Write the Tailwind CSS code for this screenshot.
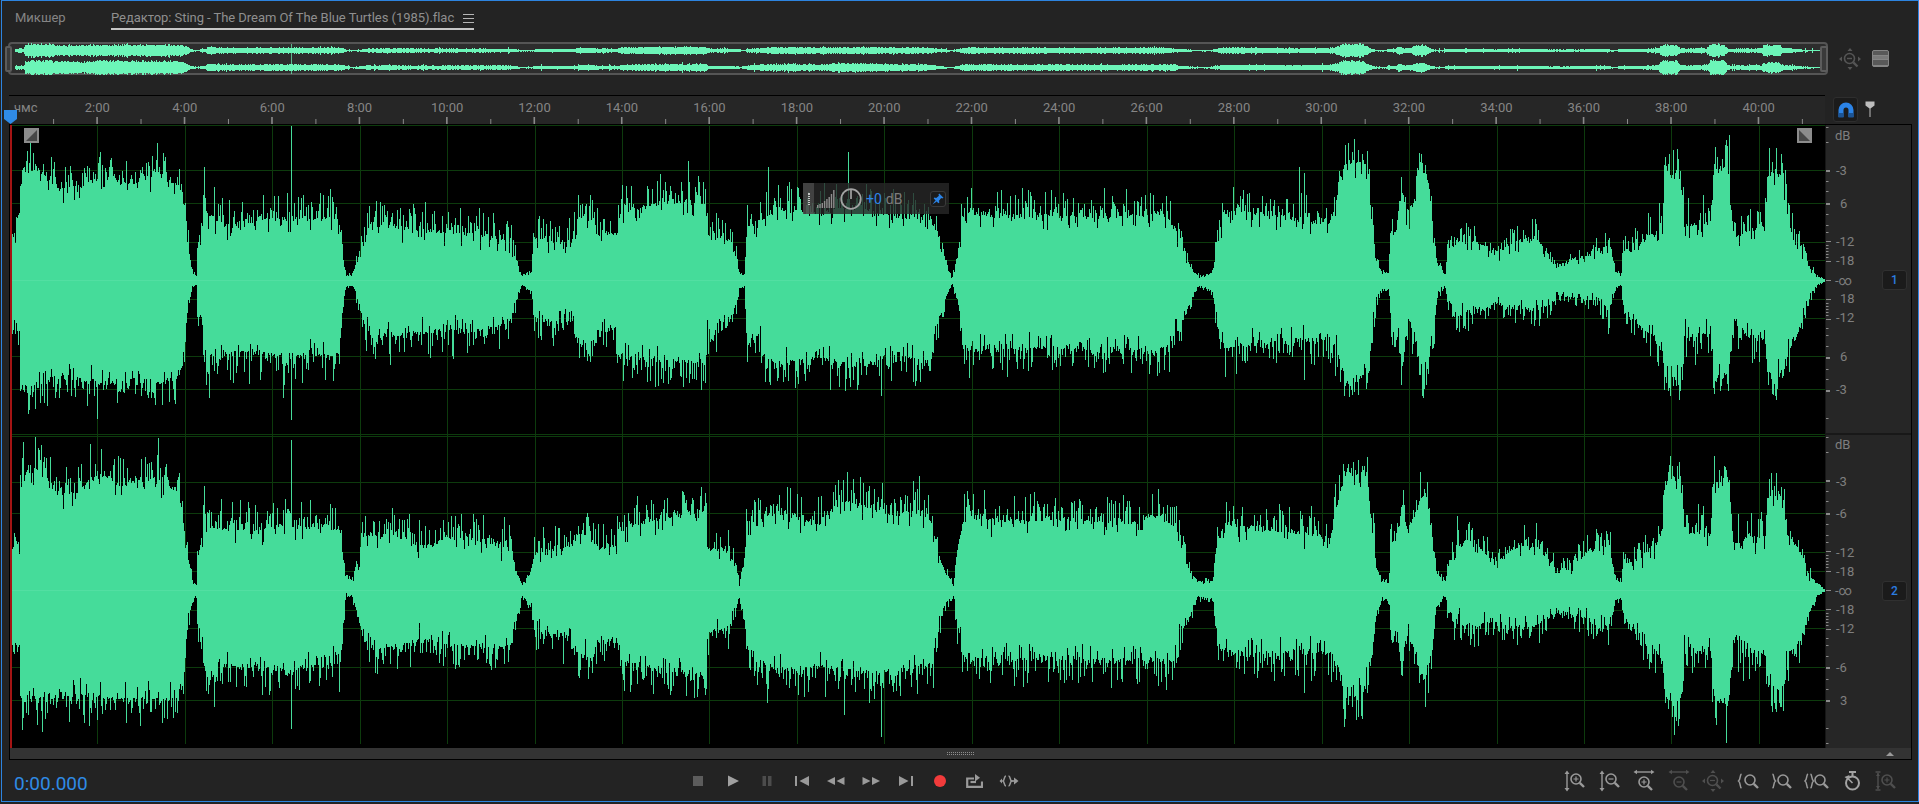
<!DOCTYPE html>
<html lang="ru">
<head>
  <meta charset="UTF-8" />
  <title>Редактор: Sting - The Dream Of The Blue Turtles (1985).flac</title>
  <script src="https://cdn.jsdelivr.net/npm/@tailwindcss/browser@4"></script>
</head>
<body class="bg-[#232323] [font-family:Roboto,sans-serif]">

  <!-- shared icon parts -->
  <svg class="hidden">
    <defs>
      <g id="mag" fill="none" stroke-width="1.6">
        <circle cx="0" cy="0" r="5" />
        <path d="M3.8 3.8 L8 8" stroke-width="2.4" />
      </g>
    </defs>
  </svg>

  <div class="ml-[1px] flex h-[802px] w-[1918px] flex-col overflow-hidden border border-[#2d84e0]">

    <!-- tabs -->
    <div class="flex h-[29px] shrink-0 pl-[13px] text-[13px] leading-none">
      <span class="w-[96px] pt-[10px] text-[#858585]">Микшер</span>
      <div class="flex w-[363px] border-b-2 border-[#c6c6c6] pt-[10px] text-[#8f8f8f]">
        <span class="tracking-[-0.05px]">Редактор: Sting - The Dream Of The Blue Turtles (1985).flac</span>
        <span class="ml-auto mt-[3px] flex h-[9px] w-[11px] flex-col justify-between">
          <i class="block h-[1px] bg-[#b5b5b5]"></i>
          <i class="block h-[1px] bg-[#b5b5b5]"></i>
          <i class="block h-[1px] bg-[#b5b5b5]"></i>
        </span>
      </div>
    </div>

    <!-- overview -->
    <div class="ml-[6px] mt-[12px] flex h-[33px] shrink-0 items-center">
      <div class="relative h-[33px] w-[1820px] rounded-[4px] border-2 border-[#555555] bg-[#2d2d2d]">
        <svg id="overview" class="absolute left-[-2px] top-[-2px] h-[33px] w-[1820px]" viewBox="8 42 1820 33"></svg>
        <div class="absolute left-[-5px] top-[2px] h-[26px] w-[7px] rounded-[2px] border-2 border-[#5c5c5c] bg-[#3a3a3a]"></div>
        <div class="absolute right-[-2px] top-[2px] h-[26px] w-[8px] rounded-[2px] border-2 border-[#5c5c5c] bg-[#3a3a3a]"></div>
      </div>
      <svg class="ml-[10px] h-[24px] w-[24px]" viewBox="0 0 24 24" stroke="#555555" fill="#555555">
        <path d="M12 1 L9.5 4 H14.5 Z M12 23 L9.5 20 H14.5 Z M1 12 L4 9.5 V14.5 Z M23 12 L20 9.5 V14.5 Z" stroke="none" />
        <use href="#mag" x="11.5" y="11.5" />
        <path d="M9 11.5 H14" fill="none" stroke-width="1.4" />
      </svg>
      <div class="ml-[10px] flex h-[17px] w-[17px] flex-col gap-[1px] overflow-hidden rounded-[2px] border border-[#858585] bg-[#858585]">
        <i class="block h-[4px] bg-[#595959]"></i>
        <i class="block h-[3px] bg-[#7a7a7a]"></i>
        <i class="block h-[5px] bg-[#595959]"></i>
      </div>
    </div>

    <!-- time ruler -->
    <div class="ml-[7px] mt-[20px] flex h-[29px] shrink-0">
      <div class="relative h-[29px] w-[1816px] border-t border-black bg-[#262626] text-[13px] leading-none text-[#858585]">
        <span class="absolute left-[5px] top-[5px]">чмс</span>
        <div class="flex pl-[44.6px] pt-[5px] text-center">
          <span class="w-[87.45px] shrink-0">2:00</span>
          <span class="w-[87.45px] shrink-0">4:00</span>
          <span class="w-[87.45px] shrink-0">6:00</span>
          <span class="w-[87.45px] shrink-0">8:00</span>
          <span class="w-[87.45px] shrink-0">10:00</span>
          <span class="w-[87.45px] shrink-0">12:00</span>
          <span class="w-[87.45px] shrink-0">14:00</span>
          <span class="w-[87.45px] shrink-0">16:00</span>
          <span class="w-[87.45px] shrink-0">18:00</span>
          <span class="w-[87.45px] shrink-0">20:00</span>
          <span class="w-[87.45px] shrink-0">22:00</span>
          <span class="w-[87.45px] shrink-0">24:00</span>
          <span class="w-[87.45px] shrink-0">26:00</span>
          <span class="w-[87.45px] shrink-0">28:00</span>
          <span class="w-[87.45px] shrink-0">30:00</span>
          <span class="w-[87.45px] shrink-0">32:00</span>
          <span class="w-[87.45px] shrink-0">34:00</span>
          <span class="w-[87.45px] shrink-0">36:00</span>
          <span class="w-[87.45px] shrink-0">38:00</span>
          <span class="w-[87.45px] shrink-0">40:00</span>
        </div>
        <svg id="timeTicks" class="absolute left-0 top-[-1px] h-[29px] w-[1816px]" viewBox="9 95 1816 29"></svg>
      </div>
      <div class="ml-[8px] flex h-[25px] w-[25px] items-center justify-center self-center rounded-[3px] border border-[#2e2e2e] bg-[#1b1b1b]">
        <svg class="h-[16px] w-[16px]" viewBox="0 0 16 16">
          <path d="M3 15 V8 a5 5 0 0 1 10 0 V15" fill="none" stroke="#2b83e6" stroke-width="5" />
          <path d="M0.5 11 H5.5 V15.5 H0.5 Z M10.5 11 H15.5 V15.5 H10.5 Z" fill="#1c5596" />
        </svg>
      </div>
      <svg class="ml-[7px] mt-[6px] h-[16px] w-[10px]" viewBox="0 0 10 16">
        <path d="M0.5 0.5 H9.5 V4.5 L5.5 7.5 V16 H4.5 V7.5 L0.5 4.5 Z" fill="#bdbdbd" />
      </svg>
    </div>

    <!-- waveform + amplitude scale -->
    <div class="ml-[7px] flex h-[624px] w-[1903px] shrink-0 border-r border-l border-t border-black">
      <div class="relative h-[623px] w-[1815px] shrink-0 bg-black">
        <svg id="wave" class="h-[623px] w-[1815px]" viewBox="10 125 1815 623"></svg>

        <svg class="absolute left-[14px] top-[3px] h-[15px] w-[15px]" viewBox="0 0 15 15">
          <rect width="15" height="15" fill="#8c8c8c" />
          <path d="M2 13 L13 2 V13 Z" fill="#474747" />
        </svg>
        <svg class="absolute left-[1787px] top-[3px] h-[15px] w-[15px]" viewBox="0 0 15 15">
          <rect width="15" height="15" fill="#8c8c8c" />
          <path d="M2 2 L13 13 H2 Z" fill="#474747" />
        </svg>

        <!-- floating gain control -->
        <div class="absolute left-[793px] top-[58px] flex h-[31px] w-[146px] items-center bg-[#282828]/80">
          <div class="flex h-full w-[11px] items-center justify-center bg-[#6a6a6a]/45">
            <i class="block h-[12px] w-[2px] border-x border-dotted border-[#c4c4c4]"></i>
          </div>
          <svg class="ml-[3px] h-[18px] w-[18px]" viewBox="0 0 18 18" fill="#8e8e8e">
            <rect x="0" y="15" width="1.4" height="3" /><rect x="2.3" y="14" width="1.4" height="4" />
            <rect x="4.6" y="13" width="1.4" height="5" /><rect x="6.9" y="11" width="1.4" height="7" />
            <rect x="9.2" y="9" width="1.4" height="9" /><rect x="11.5" y="7" width="1.4" height="11" />
            <rect x="13.8" y="4" width="1.4" height="14" /><rect x="16.1" y="0" width="1.4" height="18" />
          </svg>
          <svg class="ml-[5px] h-[22px] w-[22px]" viewBox="0 0 22 22" fill="none" stroke="#a3a3a3" stroke-width="1.7">
            <circle cx="11" cy="11" r="9.8" />
            <path d="M11 1.5 V11" />
          </svg>
          <span class="ml-[4px] text-[14px] leading-none text-[#2f86e8]">+0</span>
          <span class="ml-[4px] text-[14px] leading-none text-[#7d7d7d]">dB</span>
          <div class="ml-auto mr-[3px] flex h-[16px] w-[16px] items-center justify-center rounded-[3px] border border-[#3a3a3a] bg-[#1b1b1b]">
            <svg class="h-[12px] w-[12px]" viewBox="0 0 12 12" fill="#2b83e6">
              <path d="M7.2 0.5 L11.5 4.8 L10.2 5.6 L9.2 5 L7 7.8 L7.4 9.6 L6.4 10.3 L1.7 5.6 L2.4 4.6 L4.2 5 L7 2.8 L6.4 1.8 Z" />
              <path d="M3.6 7.2 L0.4 11.6 L4.8 8.4 Z" />
            </svg>
          </div>
        </div>

        <div class="absolute left-0 top-0 h-full w-[2px] bg-[#a51414]"></div>
      </div>

      <div class="relative h-[623px] flex-1 border-l border-[#161616] bg-[#262626] text-[13px] leading-none text-[#7f7f7f]">
        <svg id="ampTicks" class="absolute left-0 top-0 h-[623px] w-[8px]" viewBox="1825 125 8 623"></svg>
        <div class="absolute left-0 right-0 top-[308px] h-[2px] bg-[#181818]"></div>

        <span class="absolute left-[9px] top-[4px]">dB</span>
        <span class="absolute left-[10px] top-[39px]">-3</span>
        <span class="absolute left-[14px] top-[72px]">6</span>
        <span class="absolute left-[10px] top-[110px]">-12</span>
        <span class="absolute left-[10px] top-[129px]">-18</span>
        <span class="absolute left-[9px] top-[149px]">-∞</span>
        <span class="absolute left-[14px] top-[167px]">18</span>
        <span class="absolute left-[10px] top-[186px]">-12</span>
        <span class="absolute left-[14px] top-[225px]">6</span>
        <span class="absolute left-[10px] top-[258px]">-3</span>

        <span class="absolute left-[9px] top-[313px]">dB</span>
        <span class="absolute left-[10px] top-[350px]">-3</span>
        <span class="absolute left-[10px] top-[382px]">-6</span>
        <span class="absolute left-[10px] top-[421px]">-12</span>
        <span class="absolute left-[10px] top-[440px]">-18</span>
        <span class="absolute left-[9px] top-[459px]">-∞</span>
        <span class="absolute left-[10px] top-[478px]">-18</span>
        <span class="absolute left-[10px] top-[497px]">-12</span>
        <span class="absolute left-[10px] top-[536px]">-6</span>
        <span class="absolute left-[14px] top-[569px]">3</span>

        <div class="absolute left-[56px] top-[145px] flex h-[20px] w-[25px] items-center justify-center rounded-[3px] border border-[#303030] bg-[#1b1b1b] text-[12px] font-medium text-[#2b7de1]">1</div>
        <div class="absolute left-[56px] top-[456px] flex h-[20px] w-[25px] items-center justify-center rounded-[3px] border border-[#303030] bg-[#1b1b1b] text-[12px] font-medium text-[#2b7de1]">2</div>
      </div>
    </div>

    <!-- scrollbar -->
    <div class="ml-[7px] flex h-[12px] w-[1903px] shrink-0 items-center border-x border-b border-black bg-[#333333]">
      <i class="ml-[937px] block h-[3px] w-[27px] border-y border-dotted border-[#8c8c8c]"></i>
      <i class="ml-[912px] block h-0 w-0 border-x-[4px] border-b-[4px] border-x-transparent border-b-[#9a9a9a]"></i>
    </div>

    <!-- footer -->
    <div class="flex h-[41px] shrink-0 items-center">
      <div class="w-[678.7px] shrink-0 pl-[12px] pt-[6px] text-[19px] leading-none text-[#2f8be6]">0:00.000</div>

      <!-- transport -->
      <div class="flex shrink-0 text-[#9a9a9a]">
        <span class="flex h-[24px] w-[34.6px] items-center justify-center">
          <i class="block h-[10px] w-[10px] bg-[#5c5c5c]"></i>
        </span>
        <span class="flex h-[24px] w-[34.6px] items-center justify-center">
          <svg class="h-[12px] w-[12px]" viewBox="0 0 12 12" fill="#a0a0a0"><path d="M1 0.5 L12 6 L1 11.5 Z" /></svg>
        </span>
        <span class="flex h-[24px] w-[34.6px] items-center justify-center">
          <svg class="h-[12px] w-[10px]" viewBox="0 0 10 12" fill="#4c4c4c"><rect x="0.5" y="1" width="3.5" height="10" /><rect x="6" y="1" width="3.5" height="10" /></svg>
        </span>
        <span class="flex h-[24px] w-[34.6px] items-center justify-center">
          <svg class="h-[12px] w-[14px]" viewBox="0 0 14 12" fill="#9a9a9a"><rect x="0" y="1" width="2" height="10" /><path d="M14 1 V11 L4.5 6 Z" /></svg>
        </span>
        <span class="flex h-[24px] w-[34.6px] items-center justify-center">
          <svg class="h-[10px] w-[18px]" viewBox="0 0 18 10" fill="#9a9a9a"><path d="M8 1 V9 L0 5 Z M17.5 1 V9 L9.5 5 Z" /></svg>
        </span>
        <span class="flex h-[24px] w-[34.6px] items-center justify-center">
          <svg class="h-[10px] w-[18px]" viewBox="0 0 18 10" fill="#9a9a9a"><path d="M0.5 1 V9 L8.5 5 Z M10 1 V9 L18 5 Z" /></svg>
        </span>
        <span class="flex h-[24px] w-[34.6px] items-center justify-center">
          <svg class="h-[12px] w-[14px]" viewBox="0 0 14 12" fill="#9a9a9a"><path d="M0 1 V11 L9.5 6 Z" /><rect x="12" y="1" width="2" height="10" /></svg>
        </span>
        <span class="flex h-[24px] w-[34.6px] items-center justify-center">
          <i class="block h-[12px] w-[12px] rounded-full bg-[#f23b3b]"></i>
        </span>
        <span class="flex h-[24px] w-[34.6px] items-center justify-center">
          <svg class="h-[14px] w-[17px]" viewBox="0 0 17 14" fill="none" stroke="#9a9a9a" stroke-width="2.2">
            <path d="M8 4.5 H1.2 V12.8 H16 V7.5" />
            <path d="M9 0 L14 3.8 L9 7.6 Z" fill="#9a9a9a" stroke="none" />
            <path d="M4.5 8 H10" />
          </svg>
        </span>
        <span class="flex h-[24px] w-[34.6px] items-center justify-center">
          <svg class="h-[12px] w-[20px]" viewBox="0 0 20 12" fill="none" stroke="#9a9a9a" stroke-width="1.6">
            <path d="M7 1 C5 1 5.5 5.5 4 6 C5.5 6.5 5 11 7 11" />
            <path d="M9.5 1 C11.5 1 11 5.5 12.5 6 C11 6.5 11.5 11 9.5 11" />
            <path d="M3 3.5 L0.5 6 L3 8.5 Z M15 2.5 L19.5 6 L15 9.5 Z" fill="#9a9a9a" stroke="none" />
            <path d="M12 6 H16" />
          </svg>
        </span>
      </div>

      <!-- zoom controls -->
      <div class="ml-[531px] flex shrink-0">
        <span class="flex h-[24px] w-[34.6px] items-center justify-center">
          <svg class="h-[24px] w-[24px]" viewBox="0 0 24 24" stroke="#9a9a9a" fill="#9a9a9a">
            <path d="M4 4 V20" stroke-width="1.4" /><path d="M4 1.5 L1.5 5 H6.5 Z M4 22.5 L1.5 19 H6.5 Z" stroke="none" />
            <use href="#mag" x="13" y="10" /><path d="M10.5 10 H15.5 M13 7.5 V12.5" stroke-width="1.2" fill="none" />
          </svg>
        </span>
        <span class="flex h-[24px] w-[34.6px] items-center justify-center">
          <svg class="h-[24px] w-[24px]" viewBox="0 0 24 24" stroke="#9a9a9a" fill="#9a9a9a">
            <path d="M4 4 V20" stroke-width="1.4" /><path d="M4 1.5 L1.5 5 H6.5 Z M4 22.5 L1.5 19 H6.5 Z" stroke="none" />
            <use href="#mag" x="13" y="10" /><path d="M10.5 10 H15.5" stroke-width="1.2" fill="none" />
          </svg>
        </span>
        <span class="flex h-[24px] w-[34.6px] items-center justify-center">
          <svg class="h-[24px] w-[24px]" viewBox="0 0 24 24" stroke="#9a9a9a" fill="#9a9a9a">
            <path d="M4 3 H20" stroke-width="1.4" /><path d="M1.5 3 L5 0.8 V5.2 Z M22.5 3 L19 0.8 V5.2 Z" stroke="none" />
            <use href="#mag" x="12" y="13" /><path d="M9.5 13 H14.5 M12 10.5 V15.5" stroke-width="1.2" fill="none" />
          </svg>
        </span>
        <span class="flex h-[24px] w-[34.6px] items-center justify-center">
          <svg class="h-[24px] w-[24px]" viewBox="0 0 24 24" stroke="#4f4f4f" fill="#4f4f4f">
            <path d="M4 3 H20" stroke-width="1.4" /><path d="M1.5 3 L5 0.8 V5.2 Z M22.5 3 L19 0.8 V5.2 Z" stroke="none" />
            <use href="#mag" x="12" y="13" /><path d="M9.5 13 H14.5" stroke-width="1.2" fill="none" />
          </svg>
        </span>
        <span class="flex h-[24px] w-[34.6px] items-center justify-center">
          <svg class="h-[24px] w-[24px]" viewBox="0 0 24 24" stroke="#4f4f4f" fill="#4f4f4f">
            <path d="M12 1 L9.5 4 H14.5 Z M12 23 L9.5 20 H14.5 Z M1 12 L4 9.5 V14.5 Z M23 12 L20 9.5 V14.5 Z" stroke="none" />
            <use href="#mag" x="11.5" y="11.5" /><path d="M9 11.5 H14" stroke-width="1.2" fill="none" />
          </svg>
        </span>
        <span class="flex h-[24px] w-[34.6px] items-center justify-center">
          <svg class="h-[24px] w-[24px]" viewBox="0 0 24 24" stroke="#9a9a9a" fill="#9a9a9a">
            <path d="M5.5 5 C3.5 6 5 10 2.5 12 C5 14 3.5 18 5.5 19" fill="none" stroke-width="1.5" />
            <use href="#mag" x="14" y="11" />
          </svg>
        </span>
        <span class="flex h-[24px] w-[34.6px] items-center justify-center">
          <svg class="h-[24px] w-[24px]" viewBox="0 0 24 24" stroke="#9a9a9a" fill="#9a9a9a">
            <path d="M2.5 5 C4.5 6 3 10 5.5 12 C3 14 4.5 18 2.5 19" fill="none" stroke-width="1.5" />
            <use href="#mag" x="13" y="11" />
          </svg>
        </span>
        <span class="flex h-[24px] w-[34.6px] items-center justify-center">
          <svg class="h-[24px] w-[26px]" viewBox="0 0 26 24" stroke="#9a9a9a" fill="#9a9a9a">
            <path d="M4 5 C2 6 3.5 10 1 12 C3.5 14 2 18 4 19" fill="none" stroke-width="1.5" />
            <path d="M6.5 5 C8.5 6 7 10 9.5 12 C7 14 8.5 18 6.5 19" fill="none" stroke-width="1.5" />
            <use href="#mag" x="16" y="11" />
          </svg>
        </span>
        <span class="flex h-[24px] w-[34.6px] items-center justify-center">
          <svg class="h-[24px] w-[24px]" viewBox="0 0 24 24" fill="none" stroke="#a3a3a3" stroke-width="2">
            <circle cx="12.5" cy="14" r="6.5" />
            <path d="M9 3 H16 M12.5 3 V7" stroke-width="2" />
            <path d="M12.5 14 L8 9.5" stroke-width="1.6" />
            <path d="M4.5 8 L9.5 6 L8.5 11 Z" fill="#a3a3a3" stroke="none" />
          </svg>
        </span>
        <span class="flex h-[24px] w-[34.6px] items-center justify-center">
          <svg class="h-[24px] w-[24px]" viewBox="0 0 24 24" stroke="#4f4f4f" fill="#4f4f4f">
            <path d="M4 4 V20" stroke-width="1.4" /><path d="M1.5 3 H6.5 M1.5 21 H6.5" stroke-width="1.4" /><path d="M4 4 L2 7 H6 Z M4 20 L2 17 H6 Z" stroke="none" />
            <use href="#mag" x="13" y="11" /><path d="M10.5 11 H15.5 M13 8.5 V13.5" stroke-width="1.2" fill="none" />
          </svg>
        </span>
      </div>
    </div>
  </div>

  <script>
    // envelopes traced from the track: [x, top, bottom], per source strip
    const STRIPS = [0, 620, 1220];
    const ch1 = [
      [[30,290,500],[50,270,510],[52,130,650],[100,120,650],[150,165,620],[200,160,630],[250,140,640],[300,150,640],[350,150,630],[400,130,640],[450,160,630],[465,190,590],[470,240,510],[478,310,430],[485,370,410],[495,380,400],[497,380,400],[498,310,470],[512,300,480],[515,220,590],[530,230,600],[570,260,570],[620,250,560],[700,240,570],[760,245,570],[855,240,570],[862,280,530],[868,340,440],[875,378,405],[890,378,400],[905,340,430],[920,290,490],[945,265,525],[1000,262,520],[1100,275,510],[1200,280,510],[1290,295,490],[1305,340,440],[1320,380,400],[1345,370,415],[1352,285,480],[1400,300,490],[1450,295,490],[1460,240,530],[1500,240,540],[1510,280,510],[1560,280,500],[1565,260,570]],
      [[0,230,570],[50,215,580],[100,205,580],[170,195,590],[217,210,585],[222,280,510],[270,290,505],[282,300,470],[296,340,440],[302,375,405],[316,378,402],[320,260,520],[360,260,520],[365,240,570],[400,215,590],[500,230,575],[560,215,590],[640,220,590],[700,240,560],[785,240,600],[795,265,520],[810,300,470],[825,350,430],[840,385,395],[855,330,440],[866,240,530],[880,230,560],[1000,235,555],[1100,235,550],[1200,240,555],[1300,235,555],[1370,225,560],[1410,270,510],[1430,330,470],[1450,370,420],[1465,382,403],[1500,370,415],[1515,270,520]],
      [[0,270,520],[10,220,550],[100,230,540],[190,250,530],[280,250,530],[300,180,570],[320,100,640],[370,100,620],[385,220,520],[395,340,430],[410,370,410],[428,372,415],[431,280,490],[450,270,490],[460,170,610],[475,240,480],[490,200,500],[505,120,610],[525,130,610],[540,270,520],[550,350,420],[570,378,400],[575,320,440],[600,300,460],[650,300,465],[700,325,445],[740,300,450],[800,290,460],[845,340,440],[850,360,420],[900,340,430],[960,320,440],[985,300,460],[1000,370,410],[1015,378,400],[1020,320,460],[1060,310,500],[1100,280,530],[1120,240,560],[1125,130,630],[1165,140,620],[1175,260,520],[1240,250,520],[1250,120,640],[1285,120,620],[1300,290,480],[1320,280,510],[1380,260,530],[1385,130,620],[1425,130,610],[1435,240,550],[1470,300,500],[1490,360,430],[1510,380,400],[1530,388,392]]
    ];
    const ch2 = [
      [[30,1065,1300],[50,1060,1300],[52,880,1425],[100,880,1430],[150,930,1420],[200,930,1425],[250,880,1430],[300,910,1430],[400,890,1430],[450,930,1430],[465,1000,1390],[475,1090,1240],[485,1140,1200],[495,1155,1180],[497,1155,1180],[498,1080,1270],[512,1070,1290],[515,970,1350],[530,1020,1390],[570,1020,1350],[650,1020,1350],[700,1010,1360],[860,1020,1340],[868,1090,1240],[875,1130,1178],[890,1150,1178],[905,1110,1220],[920,1040,1290],[945,1040,1305],[1000,1035,1300],[1080,1065,1280],[1130,1040,1300],[1200,1050,1300],[1290,1060,1300],[1308,1130,1230],[1320,1155,1180],[1345,1120,1200],[1352,1075,1260],[1400,1070,1270],[1450,1060,1280],[1460,1030,1310],[1500,1030,1330],[1510,1070,1290],[1560,1060,1280]],
      [[0,1030,1340],[50,1005,1345],[100,1000,1360],[170,980,1360],[217,975,1370],[222,1070,1265],[270,1070,1260],[282,1090,1240],[296,1120,1200],[302,1155,1185],[316,1090,1240],[320,1040,1300],[365,990,1345],[400,975,1360],[500,1010,1350],[560,950,1360],[640,970,1370],[700,985,1360],[760,970,1350],[790,1010,1350],[800,1060,1270],[820,1120,1200],[845,1158,1178],[850,1090,1230],[868,1000,1320],[880,990,1330],[1000,1000,1330],[1100,995,1330],[1200,1000,1330],[1300,1005,1335],[1350,985,1330],[1405,1010,1340],[1415,1060,1280],[1440,1120,1230],[1460,1145,1180],[1500,1145,1190],[1510,1040,1270],[1515,1040,1290]],
      [[0,1050,1290],[10,1010,1310],[100,1020,1320],[190,1030,1310],[280,1040,1320],[300,940,1355],[320,880,1430],[370,885,1400],[385,1000,1320],[395,1110,1230],[410,1145,1190],[428,1150,1190],[431,1050,1260],[450,1050,1270],[460,950,1380],[475,1030,1270],[490,990,1300],[505,950,1370],[525,930,1380],[540,1060,1280],[550,1130,1200],[570,1150,1180],[578,1100,1220],[600,1060,1240],[650,1060,1250],[700,1100,1240],[740,1070,1250],[800,1060,1250],[845,1110,1220],[850,1130,1220],[900,1100,1225],[960,1060,1240],[985,1060,1250],[1000,1140,1190],[1015,1150,1185],[1020,1110,1230],[1060,1090,1270],[1100,1060,1310],[1120,1020,1340],[1125,900,1430],[1165,900,1440],[1175,1030,1300],[1240,1035,1310],[1250,900,1430],[1285,890,1450],[1300,1070,1270],[1320,1040,1310],[1380,1040,1320],[1385,940,1390],[1425,950,1420],[1435,1030,1330],[1470,1080,1280],[1490,1130,1220],[1510,1155,1180],[1530,1165,1170]]
    ];
    // single columns that stick out of the envelope: [strip, x, tip y]
    const SPIKES = [
      [0,737,3],[0,737,740],[0,737,790],[0,737,1515],[0,246,738],[0,399,45],[0,400,785],[0,90,782],[0,60,795],[0,228,800],
      [0,517,105],[0,1498,580],[0,107,1523],[0,57,1518],[0,77,30],[0,632,650],[0,717,685],[0,531,685],[0,1498,1375],[0,516,905],
      [1,173,90],[1,577,68],[1,375,105],[1,662,680],[1,662,1535],[1,757,880],[1,565,890],[1,374,1450],[1,568,1480],
      [1,1020,610],[1,1020,1410],[1,206,665],[1,127,1430],[1,206,908],[1,377,645],[1,1200,610],
      [2,1288,25],[2,350,62],[2,373,65],[2,1157,855],[2,1281,1550],[2,1150,1530],[2,315,680],[2,315,1510],[2,515,685],
      [2,1405,680],[2,1140,680],[2,1250,675],[2,213,640],[2,213,1425],[2,983,525],[2,983,1305],[2,600,510],[2,600,980],
      [2,1127,80],[2,1160,85],[2,1422,95],[2,1258,95],[2,520,100],[2,460,130],[2,200,105],[2,213,120],[2,360,1490],[2,520,1460]
    ];
    const toX = (s, px) => STRIPS[s] + px / 2.529;
    const toY = py => 125 + py / 2.508;
    const flat = strips => strips.flatMap((pts, s) => pts.map(p => [toX(s, p[0]), toY(p[1]), toY(p[2])]));

    function rng(seed) {
      return () => {
        seed = (seed + 0x6D2B79F5) | 0;
        let t = Math.imul(seed ^ (seed >>> 15), 1 | seed);
        t = (t + Math.imul(t ^ (t >>> 7), 61 | t)) ^ t;
        return ((t ^ (t >>> 14)) >>> 0) / 4294967296;
      };
    }

    function envAt(pts, x) {
      if (x <= pts[0][0]) return [pts[0][1], pts[0][2]];
      for (let i = 1; i < pts.length; i++) {
        if (x <= pts[i][0]) {
          const a = pts[i - 1], b = pts[i], k = (x - a[0]) / (b[0] - a[0]);
          return [a[1] + (b[1] - a[1]) * k, a[2] + (b[2] - a[2]) * k];
        }
      }
      const l = pts[pts.length - 1];
      return [l[1], l[2]];
    }

    function wavePath(pts, seed, cy) {
      const rand = rng(seed);
      const spike = () => {
        const r = rand();
        return r * r * r * 30 + rand() * 4 - (rand() < 0.28 ? rand() * 16 : 0);
      };
      let d = '';
      for (let x = 12; x < 1825; x++) {
        const [t, b] = envAt(pts, x + 0.5);
        const k = Math.min(1, (b - t) / 90);
        const y0 = Math.min(t - spike() * k, cy - 1);
        const y1 = Math.max(b + spike() * k, cy + 1);
        d += `M${x + 0.5} ${y0.toFixed(1)}V${y1.toFixed(1)}`;
      }
      return d;
    }

    const env1 = flat(ch1), env2 = flat(ch2);
    const gridX = [], gridY = [170, 203, 241.5, 260, 299, 318, 356, 389, 481.5, 513, 552, 571, 609.5, 628, 667, 700];
    for (let i = 0; i < 21; i++) gridX.push(97.3 + 87.45 * i);

    let grid = gridX.map(x => `M${Math.round(x) + 0.5} 125V744`).join('');
    grid += gridY.map(y => `M10 ${Math.round(y) + 0.5}H1825`).join('');
    grid += 'M10 125.5H1825M10 434.5H1825M10 436.5H1825';

    let extra = '';
    for (const [s, px, py] of SPIKES) {
      const x = Math.floor(toX(s, px)) + 0.5;
      extra += `M${x} ${toY(py).toFixed(1)}V${py < 780 ? 280 : 590}`;
    }

    document.getElementById('wave').innerHTML =
      `<path d="${grid}" stroke="#0d3b0d" stroke-width="1" shape-rendering="crispEdges" fill="none"/>` +
      `<path d="${wavePath(env1, 11, 280.5)}${wavePath(env2, 29, 590.5)}${extra}" stroke="#45dc9a" stroke-width="1" shape-rendering="crispEdges" fill="none"/>` +
      `<path d="M10 280.5H1825M10 590.5H1825" stroke="#52dfa2" stroke-width="1" shape-rendering="crispEdges" fill="none"/>`;

    function overviewPath(pts, seed, cy) {
      const rand = rng(seed);
      let d = '';
      for (let x = 15; x < 1820; x++) {
        const src = 10 + (x - 14) * (1815 / 1806);
        const [t, b] = envAt(pts, src);
        const amp = (b - t) / 2;
        const a = 0.9 * Math.exp(amp * 0.02) * (0.7 + rand() * 0.3) + (rand() < 0.06 ? rand() * 1.5 : 0);
        d += `M${x + 0.5} ${(cy - a).toFixed(1)}V${(cy + a).toFixed(1)}`;
      }
      return d;
    }
    document.getElementById('overview').innerHTML =
      `<path d="${overviewPath(env1, 5, 50.5)}${overviewPath(env2, 7, 67.5)}" stroke="#6cf5b8" stroke-width="1" fill="none" shape-rendering="crispEdges"/>` +
      `<path d="M291.5 44V74" stroke="#6cf5b8" stroke-opacity="0.7" stroke-width="1" shape-rendering="crispEdges"/>`;

    // time ruler ticks
    let ticks = '';
    for (let i = -1; i < 42; i++) {
      const x = 97.3 + 43.72 * i, major = i % 2 === 0;
      ticks += `<rect x="${x - (major ? 1 : 0.5)}" y="${major ? 117 : 119}" width="${major ? 1.6 : 1}" height="${major ? 7 : 5}" fill="#8a8a8a"/>`;
    }
    document.getElementById('timeTicks').innerHTML = ticks;

    // amplitude ruler ticks, mirrored around each channel's centre
    const D = [153, 138, 110, 99, 89, 77, 66, 55, 48, 39, 35, 32, 29, 26, 23, 19, 0];
    let amp = '';
    for (const cy of [280, 590]) {
      for (const dy of D) {
        const w = dy === 110 || dy === 77 ? 4 : dy === 39 || dy === 19 || dy === 0 ? 5 : 2.5;
        const h = dy === 110 || dy === 77 ? 2 : 1;
        amp += `<rect x="1825" y="${cy - dy}" width="${w}" height="${h}" fill="#8a8a8a"/>`;
        if (dy) amp += `<rect x="1825" y="${cy + dy}" width="${w}" height="${h}" fill="#8a8a8a"/>`;
      }
    }
    document.getElementById('ampTicks').innerHTML = amp;
  </script>

  <!-- playhead marker, sits over ruler and waveform -->
  <svg class="absolute left-[4px] top-[110px] h-[14px] w-[13px]" viewBox="0 0 13 14">
    <path d="M0 0 H13 V9 L6.5 14 L0 9 Z" fill="#2f8be6" />
  </svg>
</body>
</html>
